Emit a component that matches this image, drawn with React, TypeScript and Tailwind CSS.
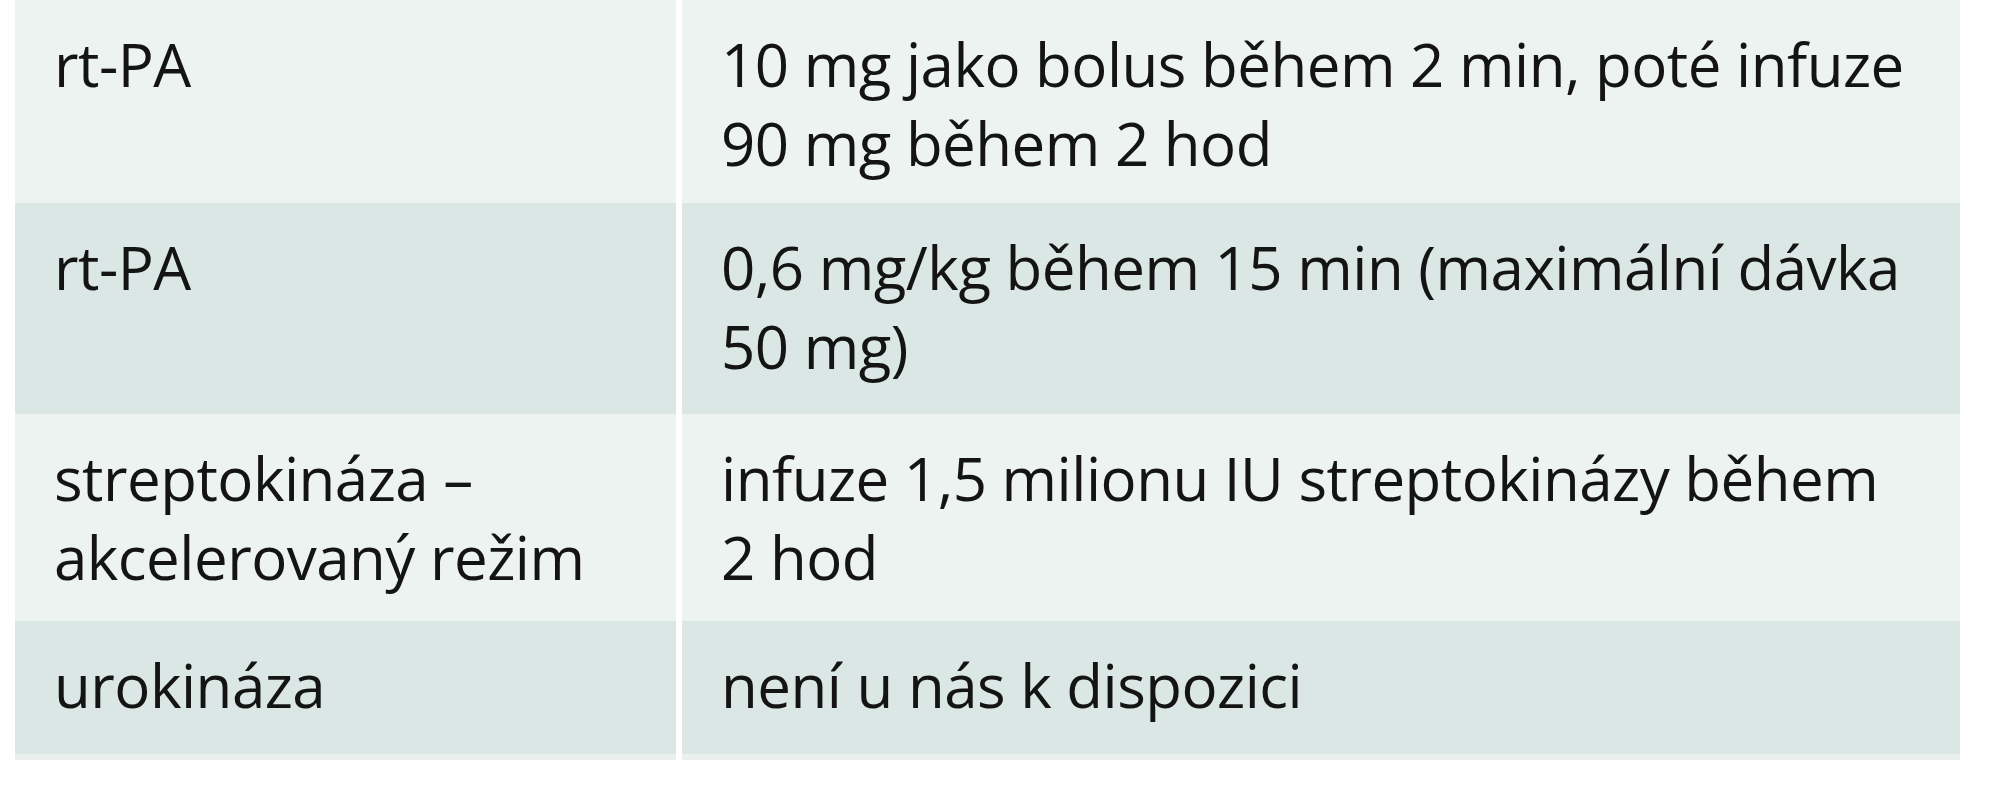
import React from "react";

type Row = { left: string[]; right: string[]; h: string; bg: string };

const rows: Row[] = [
  {
    left: ["rt-PA"],
    right: ["10 mg jako bolus během 2 min, poté infuze", "90 mg během 2 hod"],
    h: "h-[203px]",
    bg: "bg-[#ecf3f1]",
  },
  {
    left: ["rt-PA"],
    right: ["0,6 mg/kg během 15 min (maximální dávka", "50 mg)"],
    h: "h-[211px]",
    bg: "bg-[#dae7e4]",
  },
  {
    left: ["streptokináza –", "akcelerovaný režim"],
    right: ["infuze 1,5 milionu IU streptokinázy během", "2 hod"],
    h: "h-[207px]",
    bg: "bg-[#ecf3f1]",
  },
  {
    left: ["urokináza"],
    right: ["není u nás k dispozici"],
    h: "h-[133px]",
    bg: "bg-[#dae7e4]",
  },
];

function Cell({ lines }: { lines: string[] }) {
  return (
    <div className="pl-[39px] pt-[25px] text-[60px] leading-[79px] tracking-[-0.5px] text-[#141414] whitespace-nowrap">
      {lines.map((l, i) => (
        <div key={i}>{l}</div>
      ))}
    </div>
  );
}

export default function App() {
  return (
    <div
      className="bg-white w-[2005px] h-[800px] pl-[15px]"
      style={{ fontFamily: "'Open Sans', 'Noto Sans', sans-serif" }}
    >
      <div className="w-[1945px] flex flex-col">
        {rows.map((r, i) => (
          <div key={i} className={`flex gap-[6px] ${r.h}`}>
            <div className={`w-[661px] ${r.bg}`}>
              <Cell lines={r.left} />
            </div>
            <div className={`flex-1 ${r.bg}`}>
              <Cell lines={r.right} />
            </div>
          </div>
        ))}
        <div className="flex gap-[6px] h-[6px]">
          <div className="w-[661px] bg-[#e9f0ee]" />
          <div className="flex-1 bg-[#e9f0ee]" />
        </div>
      </div>
    </div>
  );
}
